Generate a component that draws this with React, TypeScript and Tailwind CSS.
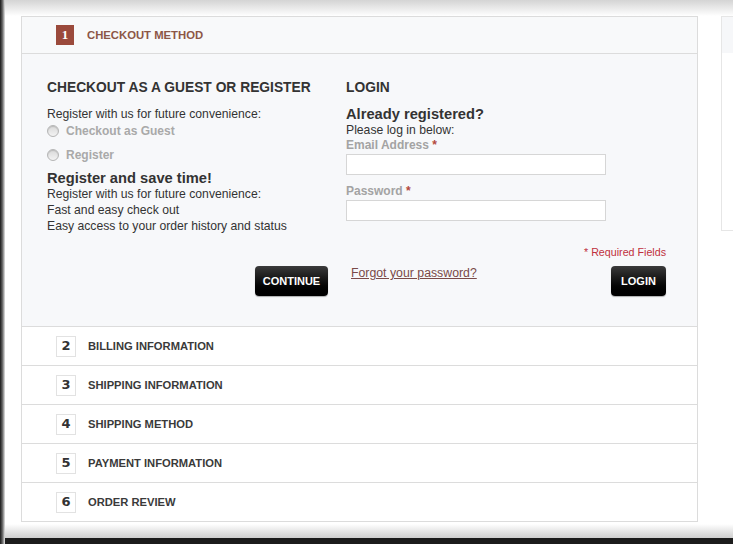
import React from 'react'

const steps = [
  { n: 2, label: 'BILLING INFORMATION' },
  { n: 3, label: 'SHIPPING INFORMATION' },
  { n: 4, label: 'SHIPPING METHOD' },
  { n: 5, label: 'PAYMENT INFORMATION' },
  { n: 6, label: 'ORDER REVIEW' },
]

const Radio = ({ label, className }: { label: string; className?: string }) => (
  <label className={`flex h-[16px] items-center ${className ?? ''}`}>
    <span className="mr-[7px] inline-block h-[12px] w-[12px] rounded-full border border-[#b5b5b5] bg-gradient-to-b from-[#d9d9d9] to-[#f3f3f3] shadow-[inset_0_1px_1px_rgba(0,0,0,0.15)]" />
    <span className="text-[12px] font-bold leading-[16px] text-[#a9a9a9]">{label}</span>
  </label>
)

const BlackButton = ({ children, className }: { children: React.ReactNode; className?: string }) => (
  <button
    className={`h-[30px] rounded-[4px] bg-gradient-to-b from-[#3b3b3b] via-[#111] to-black text-[11px] font-bold text-white shadow-[0_1px_1px_rgba(0,0,0,0.3)] ${className ?? ''}`}
  >
    {children}
  </button>
)

const App = () => {
  return (
    <div
      className="flex h-[544px] w-[733px] overflow-hidden bg-white text-[#333]"
      style={{ fontFamily: '"Liberation Sans", Arial, sans-serif' }}
    >
      {/* window edge */}
      <div className="w-[5px] shrink-0 bg-gradient-to-r from-[#1a1a1a] via-[#6a6a6a] to-[#e8e8e8]" />

      <div className="flex min-w-0 flex-1 flex-col">
        <div className="h-[16px] shrink-0 bg-gradient-to-b from-[#d4d4d4] to-white" />

        <div className="flex items-start">
          {/* checkout panel */}
          <div className="ml-[16px] w-[677px] shrink-0 border border-[#dcdcdc]">
            <div className="flex h-[36px] items-center bg-[#f8f9fa] pl-[34px]">
              <span
                className="flex h-[20px] w-[18px] items-center justify-center bg-[#9b4a3c] text-[13px] font-bold text-white"
                style={{ fontFamily: '"Liberation Serif", "Times New Roman", serif' }}
              >
                1
              </span>
              <span className="ml-[13px] text-[11.3px] font-bold text-[#8c5646]">CHECKOUT METHOD</span>
            </div>

            <div className="flex border-t border-[#dcdcdc] bg-[#f7f8fa] pl-[25px] pt-[25px] pb-[30px]">
              {/* guest / register */}
              <div className="flex w-[281px] flex-col">
                <h3 className="text-[13.8px] font-bold leading-[18px] text-[#333]">
                  CHECKOUT AS A GUEST OR REGISTER
                </h3>
                <p className="mt-[9px] text-[12.2px] leading-[16px]">Register with us for future convenience:</p>
                <Radio label="Checkout as Guest" className="mt-[1px]" />
                <Radio label="Register" className="mt-[8px]" />
                <h4 className="mt-[7px] text-[14.7px] font-bold leading-[16px]">Register and save time!</h4>
                <p className="text-[12.2px] leading-[16px]">Register with us for future convenience:</p>
                <p className="text-[12.2px] leading-[16px]">Fast and easy check out</p>
                <p className="text-[12.2px] leading-[16px]">Easy access to your order history and status</p>
                <div className="mt-[32px] flex justify-end">
                  <BlackButton className="w-[73px]">CONTINUE</BlackButton>
                </div>
              </div>

              {/* login */}
              <div className="ml-[18px] flex w-[320px] flex-col">
                <h3 className="text-[13.8px] font-bold leading-[18px]">LOGIN</h3>
                <h4 className="mt-[9px] text-[14.7px] font-bold leading-[16px]">Already registered?</h4>
                <p className="text-[12.2px] leading-[16px]">Please log in below:</p>
                <label className="text-[12px] font-bold leading-[15px] text-[#a3a3a3]">
                  Email Address <span className="text-[#b4493d]">*</span>
                </label>
                <input className="mt-[1px] h-[21px] w-[260px] border border-[#d6d6d6] bg-white outline-none" />
                <label className="mt-[8px] text-[12px] font-bold leading-[16px] text-[#a3a3a3]">
                  Password <span className="text-[#b4493d]">*</span>
                </label>
                <input
                  type="password"
                  className="mt-[1px] h-[21px] w-[260px] border border-[#d6d6d6] bg-white outline-none"
                />
                <p className="mt-[25px] text-right text-[10.7px] leading-[12px] text-[#c0303c]">* Required Fields</p>
                <div className="mt-[8px] flex items-start justify-between">
                  <a href="#" className="ml-[5px] text-[12.3px] leading-[14px] text-[#7a4a48] underline">
                    Forgot your password?
                  </a>
                  <BlackButton className="w-[55px]">LOGIN</BlackButton>
                </div>
              </div>
            </div>

            {steps.map((s) => (
              <div key={s.n} className="flex h-[39px] items-center border-t border-[#dcdcdc] bg-white pl-[34px]">
                <span
                  className="flex h-[21px] w-[20px] items-center justify-center border border-[#e2e2e2] bg-white text-[13px] font-bold text-[#333]"
                  style={{ fontFamily: '"DejaVu Sans", Verdana, sans-serif' }}
                >
                  {s.n}
                </span>
                <span className="ml-[12px] text-[11.2px] font-bold text-[#3a3a3a]">{s.label}</span>
              </div>
            ))}
          </div>

          {/* side panel */}
          <div className="ml-[23px] h-[215px] flex-1 border-t border-l border-b border-[#e6e6e6]">
            <div className="h-[36px] bg-[#f6f7f9]" />
          </div>
        </div>

        <div className="mt-auto h-[14px] shrink-0 bg-gradient-to-b from-white to-[#cfcfcf]" />
        <div className="h-[6px] shrink-0 bg-[#1c1c1c]" />
      </div>
    </div>
  )
}

export default App
